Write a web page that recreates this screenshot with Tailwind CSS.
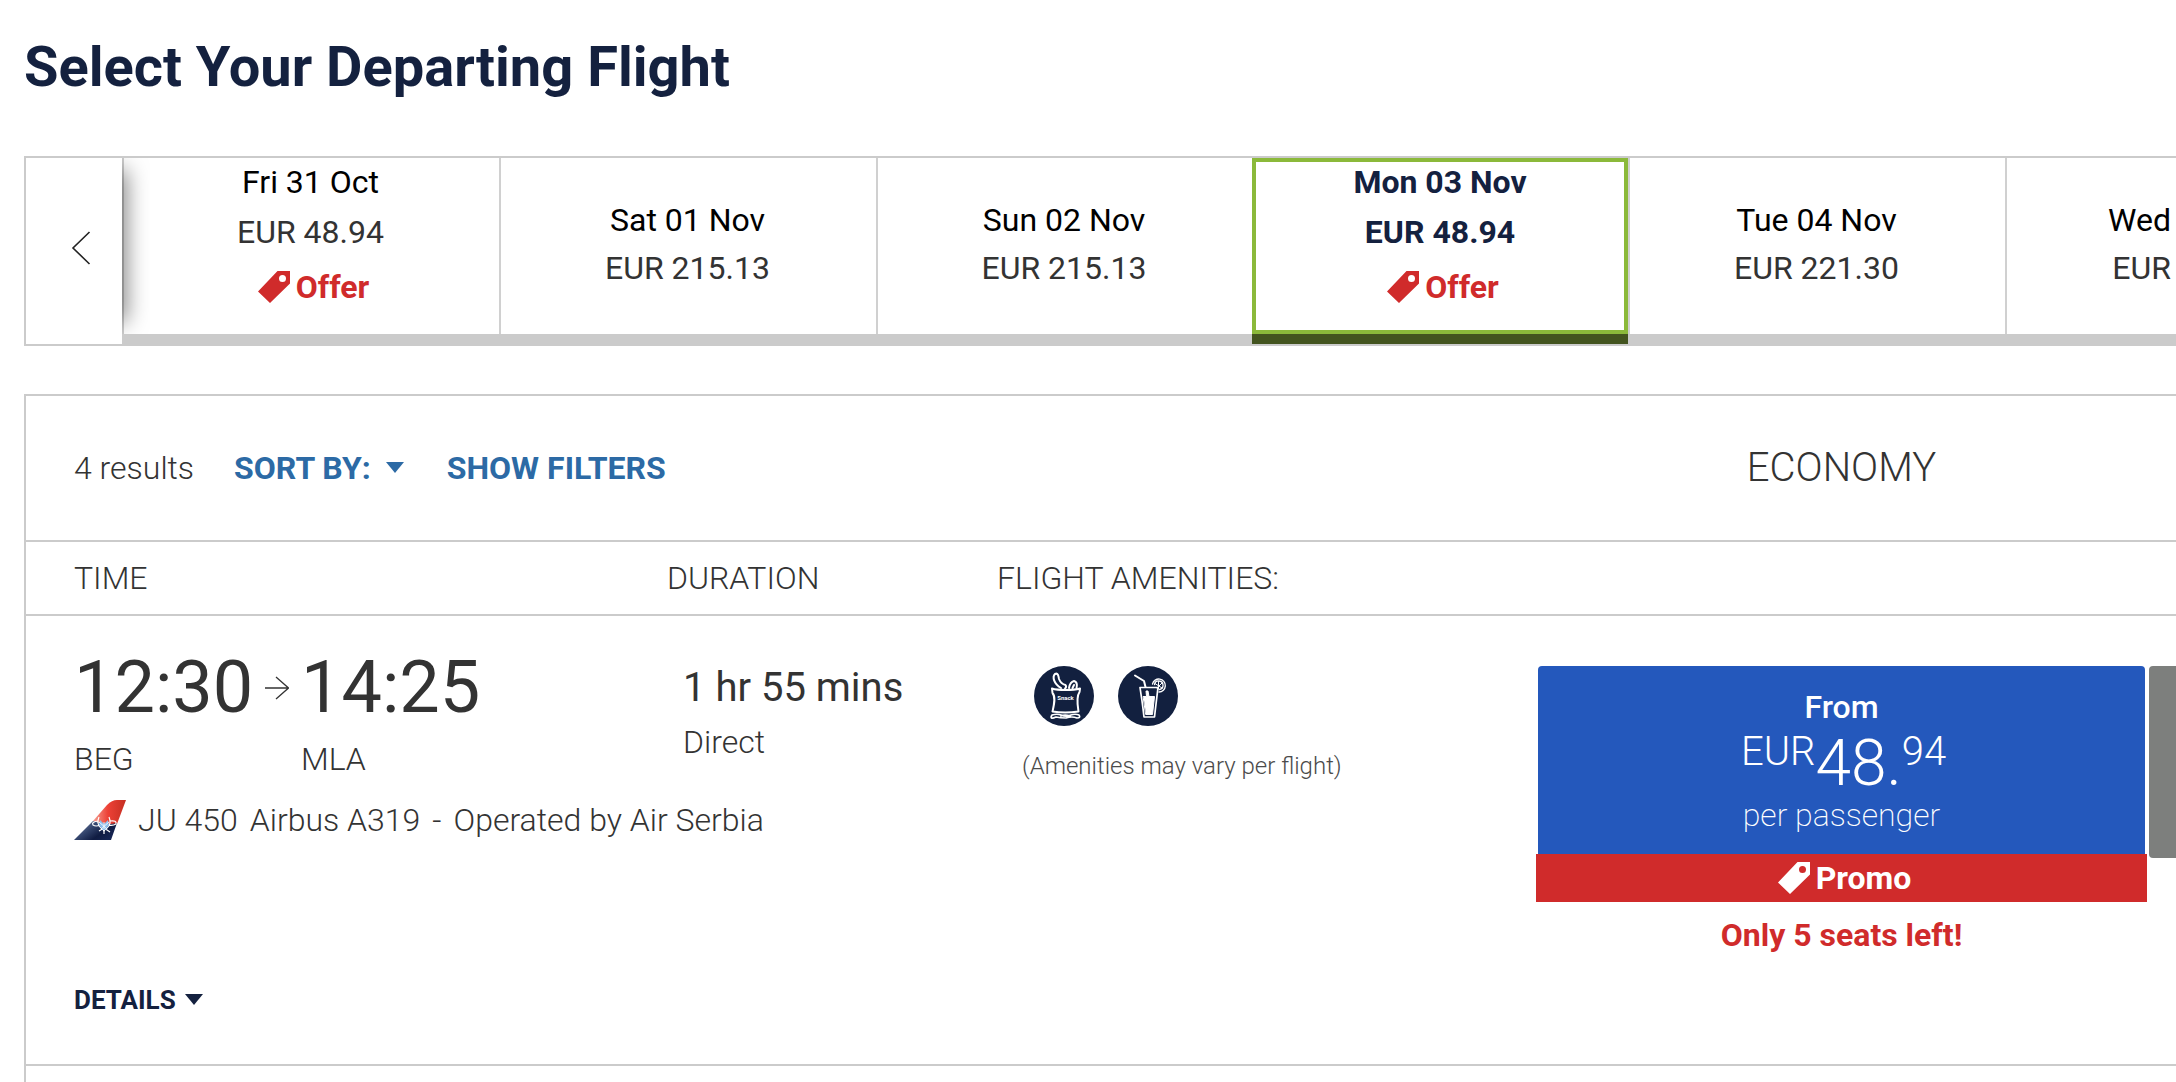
<!DOCTYPE html>
<html lang="en">
<head>
<meta charset="utf-8">
<meta name="viewport" content="width=device-width, initial-scale=1">
<title>Select Your Departing Flight</title>
<script src="https://cdn.jsdelivr.net/npm/@tailwindcss/browser@4"></script>
</head>
<body class="bg-white font-[Roboto,sans-serif] text-[32px] text-[#333] overflow-x-hidden">
<svg class="hidden" aria-hidden="true">
  <symbol id="tag" viewBox="0 0 32 32"><path fill="currentColor" fill-rule="evenodd" d="M19.500 0H32V12.500L12 32L0 20.500ZM24.500 4a3.500 3.500 0 1 0 0 7a3.500 3.500 0 1 0 0-7Z"/></symbol>
</svg>
<main class="pl-6 pt-8 h-screen overflow-hidden">
  <h1 class="text-[56px] leading-[70px] font-bold text-[#14213f] mb-[54px]">Select Your Departing Flight</h1>

  <nav class="flex h-[190px] border-2 border-r-0 border-[#cbcbcb] mb-12" aria-label="Departure dates">
    <button class="relative z-10 w-24 shrink-0 flex items-center justify-center pl-3.5 pb-1.5" aria-label="Previous dates">
      <svg class="w-5 h-9" viewBox="0 0 20 36" fill="none" stroke="#222" stroke-width="1.600"><path d="M18.500 2L2 18L18.500 34"/></svg>
    </button>
    <div class="relative flex grow min-w-0 border-b-[10px] border-[#cbcbcb]">
      <span class="absolute inset-y-0 left-0 w-7 overflow-hidden"><span class="absolute inset-y-4 -left-4 w-4 shadow-[0_0_22px_4px_rgba(0,0,0,0.5)]"></span></span>
      <button class="w-[377px] shrink-0 flex flex-col items-center shadow-[inset_2px_0_#00000030]">
        <span class="leading-[48px] text-black">Fri 31 Oct</span>
        <span class="leading-[52px]">EUR 48.94</span>
        <span class="leading-[58px] font-bold text-[#d02b2b] flex items-center gap-1.5 pl-1.5"><svg class="size-8"><use href="#tag"/></svg>Offer</span>
      </button>
      <button class="w-[377px] shrink-0 flex flex-col items-center justify-center pb-1 shadow-[inset_2px_0_#d0d0d0] leading-[48px]">
        <span class="text-black">Sat 01 Nov</span><span>EUR 215.13</span>
      </button>
      <button class="w-[376px] shrink-0 flex flex-col items-center justify-center pb-1 shadow-[inset_2px_0_#d0d0d0] leading-[48px]">
        <span class="text-black">Sun 02 Nov</span><span>EUR 215.13</span>
      </button>
      <button class="relative w-[376px] h-[186px] shrink-0 flex flex-col items-center font-bold text-[#14213f] border-b-[10px] border-[#43541f]" aria-current="date">
        <span class="absolute inset-0 border-4 border-[#8bb93a]"></span>
        <span class="leading-[48px]">Mon 03 Nov</span>
        <span class="leading-[52px]">EUR 48.94</span>
        <span class="leading-[58px] text-[#d02b2b] flex items-center gap-1.5 pl-1.5"><svg class="size-8"><use href="#tag"/></svg>Offer</span>
      </button>
      <button class="w-[377px] shrink-0 flex flex-col items-center justify-center pb-1 shadow-[inset_2px_0_#d0d0d0] leading-[48px]">
        <span class="text-black">Tue 04 Nov</span><span>EUR 221.30</span>
      </button>
      <button class="grow flex flex-col items-end justify-center pb-1 pr-[5px] shadow-[inset_2px_0_#d0d0d0] leading-[48px]">
        <span class="text-black">Wed</span><span>EUR</span>
      </button>
    </div>
  </nav>

  <section class="border-2 border-r-0 border-[#cbcbcb] h-[720px] font-light">
    <div class="flex items-center h-[146px] border-b-2 border-[#cbcbcb] pl-12">
      <span>4 results</span>
      <button class="ml-10 flex items-center gap-3.5 font-bold text-[#2c6aa5]">SORT BY:<svg class="w-5 h-3" viewBox="0 0 20 12" fill="currentColor"><path d="M1 0H19L10 11Z"/></svg></button>
      <button class="ml-[42px] font-bold text-[#2c6aa5]">SHOW FILTERS</button>
      <h2 class="ml-auto mr-[29px] w-[611px] text-center text-[40px]">ECONOMY</h2>
    </div>
    <div class="grid grid-cols-[593px_330px_1fr] items-center h-[74px] border-b-2 border-[#cbcbcb] pl-12">
      <span>TIME</span><span>DURATION</span><span>FLIGHT AMENITIES:</span>
    </div>

    <article class="grid grid-cols-[609px_339px_1fr_611px_29px] h-[450px] border-b-2 border-[#cbcbcb] pl-12">
      <div class="col-span-3 grid grid-cols-subgrid content-start">
        <div class="pt-[34px]">
          <div class="flex">
            <div class="w-[227px]">
              <div class="flex items-center text-[72px] leading-[76px] font-normal">12:30
                <svg class="w-6 h-6 ml-3" viewBox="0 0 24 24" fill="none" stroke="#333" stroke-width="1.300"><path d="M0 12H23.500M11 1L23.500 12L11 23"/></svg>
              </div>
              <div class="leading-[66px]">BEG</div>
            </div>
            <div>
              <div class="text-[72px] leading-[76px] font-normal">14:25</div>
              <div class="leading-[66px]">MLA</div>
            </div>
          </div>
        </div>
        <div class="pt-[50px]">
          <div class="text-[40px] leading-[44px] font-normal">1 hr 55 mins</div>
          <div class="leading-[64px]">Direct</div>
        </div>
        <div class="pt-[50px]">
          <div class="flex gap-6 pl-3">
            <svg class="size-[60px]" viewBox="0 0 60 60" fill="none" stroke="#fff" stroke-width="2" stroke-linejoin="round" stroke-linecap="round" role="img" aria-label="Snack">
              <circle cx="30" cy="30" r="30" fill="#12203f" stroke="none"/>
              <path d="M18 22.500C24 24.500 39 24.500 46 22.500L45.500 26C42 31 43.500 39 44.500 45.500Q31 47.500 18.500 45.500C20 39 22 31 18.500 27Z"/>
              <path d="M27 22C20 18 18 11 21 8C24 6.500 24.500 10 25 13Q27 18 31.500 19Q33 21 31 22.500M35 22Q36 16 40 15Q44 16 42.500 22.500M38.500 22L40 19"/>
              <path stroke-width="1.700" d="M18 49Q23 47.500 27 49Q32 51.500 37 49Q41 47.500 45 49Q47 52 43 52Q38 50 32 52Q26 52 22 51Q15 54 18 49ZM27 50Q31 48 36 50"/>
              <text x="31.500" y="33.500" font-size="6" font-weight="700" text-anchor="middle" fill="#fff" stroke="none">Snack</text>
            </svg>
            <svg class="size-[60px]" viewBox="0 0 60 60" fill="none" stroke="#fff" stroke-width="1.700" stroke-linejoin="round" stroke-linecap="round" role="img" aria-label="Drinks">
              <circle cx="30" cy="30" r="30" fill="#12203f" stroke="none"/>
              <path stroke-width="2" d="M17 9.500L26 15L27.500 21"/>
              <path d="M34.500 18A6.500 6.500 0 1 1 41 26M36.500 18.500A4.300 4.300 0 1 1 41.500 23.500" stroke-width="1.300"/>
              <path stroke-width="1" d="M40.500 15.500V23M37 17.500L44 22M44 17L39 22"/>
              <path d="M22 21.500H40L38.500 34Q37.500 42 36.500 51H26Q25 42 24 35Z"/>
              <path fill="#fff" stroke-width="1" d="M25.500 30.500H28.500L28 25H30L31 30.500H36.500L34.500 48.500H28Z"/>
            </svg>
          </div>
          <p class="text-[24px] leading-9 mt-[22px] text-[#4b4b4b]">(Amenities may vary per flight)</p>
        </div>
        <div class="col-span-3 flex items-center h-10 mt-2">
          <svg class="w-[52px] h-10 mr-3" viewBox="0 0 52 40" role="img" aria-label="Air Serbia">
            <defs>
              <linearGradient id="red" x1="0" x2="1"><stop offset="0" stop-color="#f5a092"/><stop offset=".45" stop-color="#ed4136"/><stop offset="1" stop-color="#c52f22"/></linearGradient>
              <linearGradient id="navy" x1="0" x2="1" y2=".6"><stop offset="0" stop-color="#8f9dba"/><stop offset=".45" stop-color="#34456d"/><stop offset=".75" stop-color="#101c42"/><stop offset="1" stop-color="#152452"/></linearGradient>
            </defs>
            <path fill="url(#red)" d="M19 21L33 5Q38 0 43 0H52L43 24L31 24Z"/>
            <path fill="url(#navy)" d="M0 40L19 21Q31 26 43 23L37 40Z"/>
            <g fill="none" stroke="#fff" stroke-width="1.200"><path d="M25 17Q22 24 27 28L31 31M35 17Q38 24 33 28L29 31M24 21Q17 22 19 25Q22 27 26 25M36 21Q43 20 42 24Q39 26 34 25M25 31L30 28L36 32M30 29V34"/></g>
            <path fill="#8fc0ee" d="M26 20L30 24L34 20L35 25L31 30H29L25 25Z"/>
            <path fill="none" stroke="#fff" stroke-width=".8" d="M25 22L33 29M35 22L27 29M30 22V29"/>
          </svg>
          <span class="flex gap-3"><span>JU 450</span><span>Airbus A319</span><span>-</span><span>Operated by Air Serbia</span></span>
        </div>
        <div class="col-span-3 mt-[142px]">
          <button class="flex items-center gap-2 text-[26px] leading-9 font-bold text-[#14213f]">DETAILS<svg class="w-5 h-3" viewBox="0 0 20 12" fill="currentColor"><path d="M1 0H19L10 11Z"/></svg></button>
        </div>
      </div>

      <div class="pt-[50px] text-center">
        <button class="block w-full">
          <span class="mx-0.5 flex flex-col items-center h-[188px] pt-[22px] rounded-t bg-[#2458bc] text-white">
            <span class="leading-[38px] font-medium">From</span>
            <span class="flex items-start pl-1 text-[64px] leading-[76px]"><span class="text-[40px] leading-[52px]">EUR</span>48.<span class="text-[40px] leading-[52px]">94</span></span>
            <span class="leading-[26px] font-extralight">per passenger</span>
          </span>
          <span class="flex items-center justify-center gap-1.5 pl-1.5 h-12 bg-[#d02b2b] text-white font-bold"><svg class="size-8"><use href="#tag"/></svg>Promo</span>
        </button>
        <p class="leading-[66px] font-bold text-[#d02b2b]">Only 5 seats left!</p>
      </div>
      <div class="mt-[50px] ml-0.5 h-48 rounded-l bg-[#7d7f7d]"></div>
    </article>
  </section>
</main>
</body>
</html>
